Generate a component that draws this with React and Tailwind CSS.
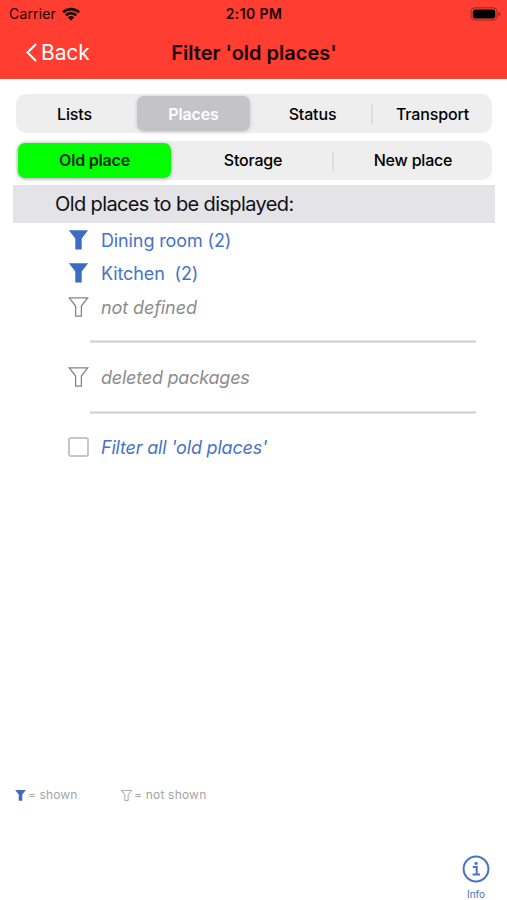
function Funnel({ filled, className }) {
  return (
    <svg viewBox="0 0 20 20" className={className}>
      {filled ? (
        <path d="M0.3 0.2H19.6L13.2 8.4V19.6H6.8V8.4Z" fill="#3b6bc4" />
      ) : (
        <path
          d="M0.8 0.8H19.2L12.9 9V19.2H7.1V9Z"
          fill="none"
          stroke="#858585"
          strokeWidth="1.3"
        />
      )}
    </svg>
  );
}

function Segment({ children, className = '' }) {
  return (
    <div className={`flex items-center justify-center whitespace-nowrap ${className}`}>{children}</div>
  );
}

function FilterRow({ filled, className, children }) {
  return (
    <div className="flex h-[33.5px] items-center pl-[68px]">
      <Funnel filled={filled} className="h-5 w-[21px] shrink-0" />
      <span className={`ml-3 whitespace-pre pt-[1.5px] text-[18px] leading-none ${className}`}>{children}</span>
    </div>
  );
}

function Divider() {
  return <hr className="ml-[90px] mt-[16.5px] h-[3px] w-[386px] border-y border-[#e6e6e6] bg-[#cdcdcd]" />;
}

export default function App() {
  return (
    <div className="flex h-[900px] w-[507px] flex-col overflow-hidden bg-white font-['Inter',sans-serif] text-black">
      <header className="h-[79px] shrink-0 bg-[#ff3d31] text-[#180000]">
        <div className="grid h-[27px] grid-cols-3 items-center pl-[9px] pr-[6px]">
          <div className="flex items-center gap-[6px]">
            <span className="text-[14px] tracking-[0.15px]">Carrier</span>
            <svg viewBox="0 0 18 14" className="h-[14px] w-[18px]" fill="#180000">
              <path d="M0 4.3A13 13 0 0 1 18 4.3L16.2 6.3A10.4 10.4 0 0 0 1.8 6.3Z" />
              <path d="M2.9 7.4A8.8 8.8 0 0 1 15.1 7.4L13.3 9.3A6.2 6.2 0 0 0 4.7 9.3Z" />
              <path d="M5.8 10.4A4.6 4.6 0 0 1 12.2 10.4L9 13.7Z" />
            </svg>
          </div>
          <div className="pr-[2px] text-center text-[14px] font-semibold tracking-[0.4px]">2:10 PM</div>
          <svg viewBox="0 0 31 14" className="h-[14px] w-[31px] justify-self-end">
            <rect x="1" y="0.8" width="26" height="12.4" rx="3.8" fill="none" stroke="#9d2820" strokeWidth="1" />
            <rect x="2.8" y="2.6" width="22.4" height="8.8" rx="2.2" />
            <path d="M28.4 5A2 2 0 0 1 28.4 9Z" fill="#9d2820" />
          </svg>
        </div>
        <div className="grid h-[50px] grid-cols-[144px_219px_144px] items-center">
          <div className="flex items-center gap-1 pl-[26px] text-white">
            <svg viewBox="0 0 11 19" className="h-[19px] w-[11px]" fill="none" stroke="white" strokeWidth="2">
              <path d="M10 1L1.5 9.5L10 18" />
            </svg>
            <span className="pt-px text-[21px] tracking-[-0.1px]">Back</span>
          </div>
          <h1 className="whitespace-nowrap pl-px pt-px text-center text-[20px] font-semibold">Filter 'old places'</h1>
        </div>
      </header>

      <main className="flex flex-col">
        <div className="ml-4 mt-[15px] flex h-[39px] w-[476px] items-center rounded-[10px] bg-[#eeeeef] text-[16px] font-medium tracking-[-0.15px]">
          <Segment className="w-[121px] pr-1">Lists</Segment>
          <Segment className="h-[35px] w-[113px] rounded-[7px] bg-[#c4c3c8] font-semibold text-white shadow-[0_1px_4px_rgba(0,0,0,0.16)]">Places</Segment>
          <Segment className="h-5 w-[123px] border-r-2 border-[#dedee0] pl-[4px]">Status</Segment>
          <Segment className="w-[119px]">Transport</Segment>
        </div>
        <div className="ml-4 mt-2 flex h-[39px] w-[476px] items-center rounded-[10px] bg-[#eeeeef] pl-[2px] text-[16px] font-medium tracking-[-0.2px]">
          <Segment className="h-[35px] w-[153px] rounded-[7px] bg-[#00ff00] pb-px font-semibold text-[#062b06] shadow-[0_1px_4px_rgba(0,0,0,0.25)]">Old place</Segment>
          <Segment className="h-5 w-[163px] border-r-2 border-[#dedee0] pb-px pl-[3px]">Storage</Segment>
          <Segment className="w-[158px] pb-px">New place</Segment>
        </div>
        <h2 className="ml-[13px] mt-[5px] flex h-[38px] w-[482px] items-center bg-[#e4e3e8] pl-[42px] text-[20px] tracking-[-0.62px] text-[#111114]">
          Old places to be displayed:
        </h2>

        <FilterRow filled className="tracking-[-0.12px] text-[#4773c8]">Dining room (2)</FilterRow>
        <FilterRow filled className="tracking-[-0.12px] text-[#4773c8]">{'Kitchen  (2)'}</FilterRow>
        <FilterRow className="tracking-[-0.1px] italic text-[#8c8c8c]">not defined</FilterRow>
        <Divider />
        <div className="mt-[17.5px]">
          <FilterRow className="tracking-[-0.22px] italic text-[#8c8c8c]">deleted packages</FilterRow>
        </div>
        <Divider />
        <div className="mt-[17px] flex h-[33.5px] items-center pl-[68px]">
          <span className="h-5 w-[21px] shrink-0 rounded-[3px] border-2 border-[#c6c6c6]" />
          <span className="ml-3 pt-px text-[18px] italic leading-none tracking-[-0.2px] text-[#4773c8]">Filter all 'old places'</span>
        </div>
      </main>

      <footer className="mt-auto">
        <div className="flex items-center pl-[15px] text-[12px] leading-4 tracking-[0.1px] text-[#a5a5a5]">
          <div className="flex w-[106px] items-center gap-[2px]">
            <Funnel filled className="h-[11px] w-[11px]" />
            <span>= shown</span>
          </div>
          <div className="flex items-center gap-[2px]">
            <Funnel className="h-[11px] w-[11px]" />
            <span className="tracking-[0.2px]">= not shown</span>
          </div>
        </div>
        <div className="ml-[461px] mt-[52px] flex h-[45px] w-[30px] flex-col items-center text-[#4773c8]">
          <svg viewBox="0 0 28 28" className="size-7 shrink-0" fill="none" stroke="#4773c8" strokeWidth="2">
            <circle cx="14" cy="14" r="12.4" />
            <path d="M10.8 12H14.7V19.5M10.6 19.6H18" />
            <circle cx="14.1" cy="8.3" r="1.6" fill="#4773c8" stroke="none" />
          </svg>
          <span className="mt-[5px] text-[10px] leading-3">Info</span>
        </div>
      </footer>
    </div>
  );
}
